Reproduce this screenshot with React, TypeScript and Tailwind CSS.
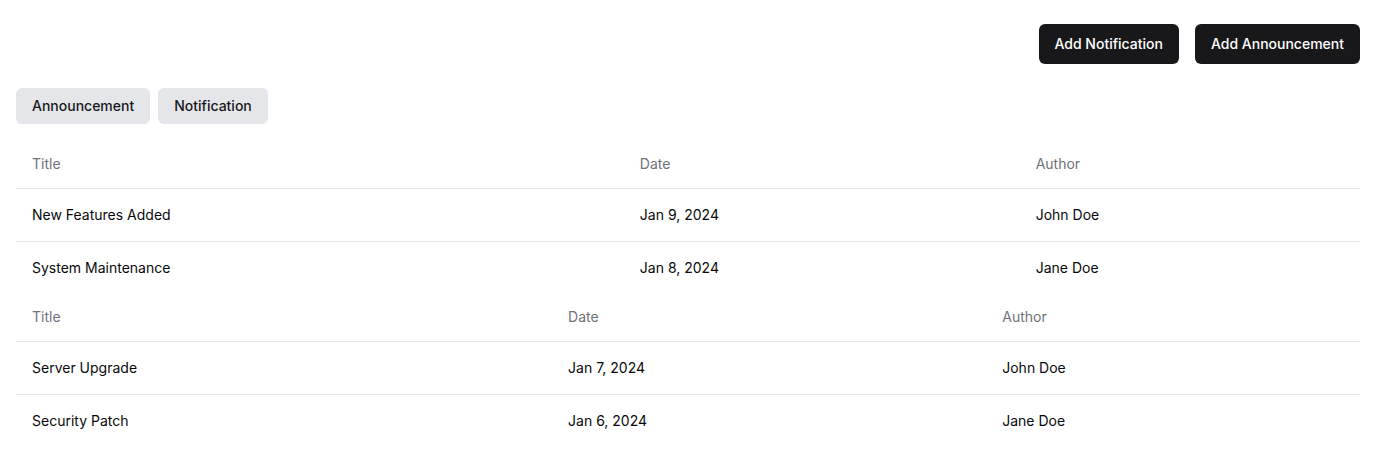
import React from "react";

const rows1 = [
  { title: "New Features Added", date: "Jan 9, 2024", author: "John Doe" },
  { title: "System Maintenance", date: "Jan 8, 2024", author: "Jane Doe" },
];
const rows2 = [
  { title: "Server Upgrade", date: "Jan 7, 2024", author: "John Doe" },
  { title: "Security Patch", date: "Jan 6, 2024", author: "Jane Doe" },
];

function DataTable({ rows }: { rows: { title: string; date: string; author: string }[] }) {
  return (
    <table className="w-full caption-bottom text-sm">
      <thead>
        <tr className="border-b border-[#e4e4e7]">
          <th className="h-12 px-4 text-left align-middle font-normal text-[#71717a]">Title</th>
          <th className="h-12 px-4 text-left align-middle font-normal text-[#71717a]">Date</th>
          <th className="h-12 px-4 text-left align-middle font-normal text-[#71717a]">Author</th>
        </tr>
      </thead>
      <tbody>
        {rows.map((r, i) => (
          <tr key={i} className={i === rows.length - 1 ? "" : "border-b border-[#e4e4e7]"}>
            <td className="p-4 align-middle">{r.title}</td>
            <td className="p-4 align-middle">{r.date}</td>
            <td className="p-4 align-middle">{r.author}</td>
          </tr>
        ))}
      </tbody>
    </table>
  );
}

export default function App() {
  return (
    <div className="min-h-[471px] bg-white px-4 pt-6 text-[#09090b]" style={{ fontFamily: "Inter, 'Noto Sans', sans-serif" }}>
      <div className="flex justify-end gap-4">
        <button className="h-10 rounded-md bg-[#18181b] px-4 text-sm font-medium text-white">Add Notification</button>
        <button className="h-10 rounded-md bg-[#18181b] px-4 text-sm font-medium text-white">Add Announcement</button>
      </div>
      <div className="mt-6 flex gap-2">
        <button className="h-9 rounded-md bg-[#e4e6ea] px-4 text-sm font-medium text-[#18181b]">Announcement</button>
        <button className="h-9 rounded-md bg-[#e4e6ea] px-4 text-sm font-medium text-[#18181b]">Notification</button>
      </div>
      <div className="mt-4">
        <DataTable rows={rows1} />
        <DataTable rows={rows2} />
      </div>
    </div>
  );
}
